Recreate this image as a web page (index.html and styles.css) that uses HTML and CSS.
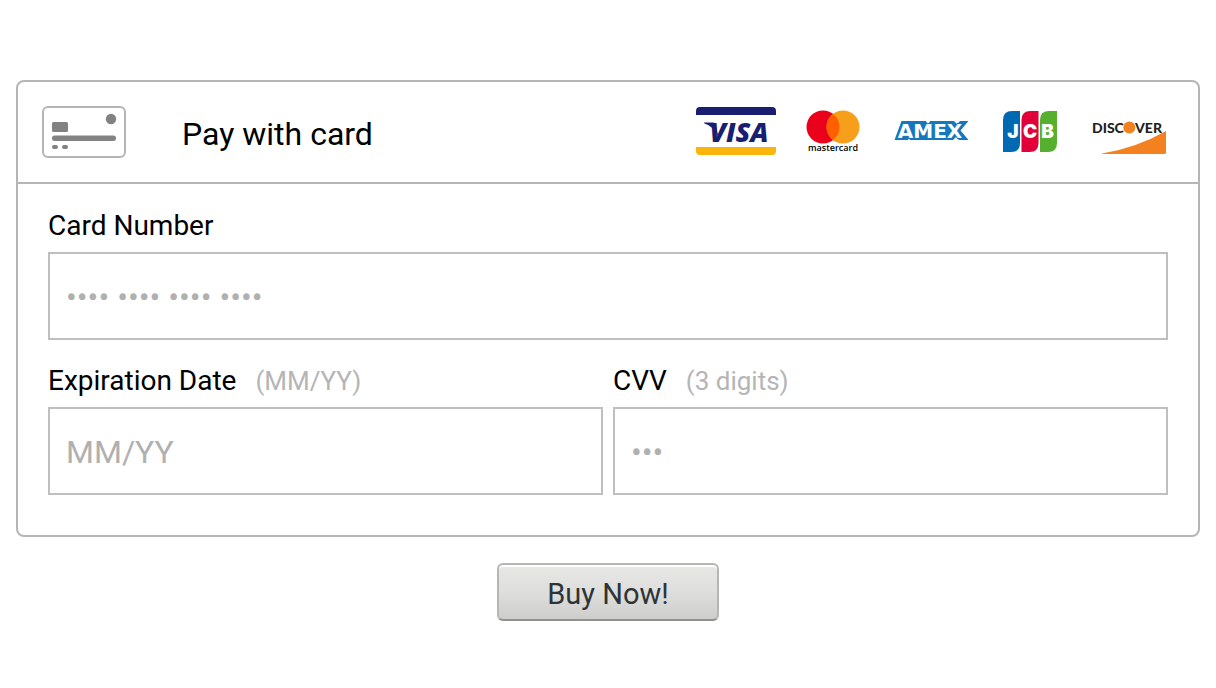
FILE: index.html
```html
<!DOCTYPE html>
<html lang="en">
<head>
<meta charset="utf-8">
<meta name="viewport" content="width=device-width, initial-scale=1">
<title>Pay with card</title>
<link rel="stylesheet" href="styles.css">
</head>
<body>
<form class="checkout">
  <section class="sheet">
    <header class="sheet-header">
      <svg class="card-icon" viewBox="0 0 84 52" aria-hidden="true">
        <rect x="1" y="1" width="82" height="50" rx="5" fill="#fff" stroke="#b5b5b5" stroke-width="2"/>
        <g fill="#828282">
          <circle cx="69" cy="13" r="5.2"/>
          <rect x="10" y="16" width="16" height="10" rx="1.500"/>
          <rect x="10" y="29.500" width="64" height="5.500" rx="2.700"/>
          <rect x="10" y="39" width="6" height="4" rx="2"/>
          <rect x="20" y="39" width="6" height="4" rx="2"/>
        </g>
      </svg>
      <h1 class="sheet-title">Pay with card</h1>
      <div class="brands">
        <svg class="brand" viewBox="0 0 80 48" role="img" aria-label="Visa">
          <path d="M0 8V4q0-4 4-4h72q4 0 4 4v4z" fill="#191e70"/>
          <path d="M0 40v4q0 4 4 4h72q4 0 4-4v-4z" fill="#f9b50b"/>
          <path d="M8 15.500h9q2.500 0 3 3l2.500 12q-4-11-14.500-14.200z" fill="#191e70"/>
          <text class="visa-text" x="43" y="34.500">VISA</text>
        </svg>
        <svg class="brand" viewBox="0 0 80 48" role="img" aria-label="Mastercard">
          <circle cx="29" cy="20" r="16.500" fill="#eb001b"/>
          <circle cx="49" cy="20" r="16.500" fill="#f79e1b"/>
          <path d="M39 6.880a16.500 16.500 0 0 1 0 26.240a16.500 16.500 0 0 1 0-26.240z" fill="#ff5f00"/>
          <text class="mc-text" x="39" y="44">mastercard</text>
        </svg>
        <svg class="brand" viewBox="0 0 80 48" role="img" aria-label="American Express">
          <path d="M9.500 14H34l2 4 2-4h24l3 3 3-3h8.500l-8 9.500L76.500 33H67l-3-3-3 3H18l-1-2-1 2H2.500z" fill="#1478be"/>
          <text class="amex-text" x="38" y="31">AMEX</text>
        </svg>
        <svg class="brand" viewBox="0 0 80 48" role="img" aria-label="JCB">
          <path d="M13 45V13q0-9 9-9h8v32q0 9-9 9z" fill="#0069b4"/>
          <path d="M31.500 45V13q0-9 9-9h8v32q0 9-9 9z" fill="#e2003b"/>
          <path d="M50 45V13q0-9 9-9h8v32q0 9-9 9z" fill="#55b02f"/>
          <text class="jcb-text" x="23" y="31">J</text>
          <text class="jcb-text" x="40" y="31">C</text>
          <text class="jcb-text" x="57.500" y="31">B</text>
        </svg>
        <svg class="brand" viewBox="0 0 80 48" role="img" aria-label="Discover">
          <text class="disc-text" x="4" y="26">DISC</text>
          <circle cx="41.300" cy="20.500" r="6" fill="#f48120"/>
          <text class="disc-text disc-end" x="74" y="26">VER</text>
          <path d="M14 46.500Q48 41 78 24v21.500q0 1.500-1.500 1.500H14z" fill="#f48120"/>
        </svg>
      </div>
    </header>
    <div class="fields">
      <div class="field field-wide">
        <label class="label" for="number">Card Number</label>
        <input class="input" id="number" type="text" inputmode="numeric" placeholder="•••• •••• •••• ••••">
      </div>
      <div class="field">
        <label class="label" for="expiry">Expiration Date <span class="hint">(MM/YY)</span></label>
        <input class="input" id="expiry" type="text" inputmode="numeric" placeholder="MM/YY">
      </div>
      <div class="field">
        <label class="label" for="cvv">CVV <span class="hint">(3 digits)</span></label>
        <input class="input" id="cvv" type="text" inputmode="numeric" placeholder="•••">
      </div>
    </div>
  </section>
  <button class="buy" type="button">Buy Now!</button>
</form>
</body>
</html>
```
FILE: styles.css
```css
* {
  box-sizing: border-box;
}

body {
  margin: 0;
  background: #fff;
  color: #000;
  font-family: Roboto, "Liberation Sans", sans-serif;
}

.checkout {
  display: flex;
  flex-direction: column;
  align-items: center;
  gap: 26px;
  padding: 80px 16px 64px;
}

.sheet {
  width: 100%;
  border: 2px solid #b5b5b5;
  border-radius: 8px;
}

.sheet-header {
  display: flex;
  align-items: center;
  padding: 24px 30px 24px 24px;
  border-bottom: 2px solid #b5b5b5;
}

.card-icon {
  flex: none;
  width: 84px;
  height: 52px;
}

.sheet-title {
  flex: 1;
  margin: 0 0 0 56px;
  padding-top: 4px;
  font-size: 32px;
  line-height: 36px;
  font-weight: 400;
}

.brands {
  display: flex;
  gap: 18px;
  padding-bottom: 2px;
}

.brand {
  width: 80px;
  height: 48px;
}

.brand text {
  text-anchor: middle;
}

.visa-text {
  font: italic 800 27px "Open Sans", sans-serif;
  fill: #191e70;
}

.mc-text {
  font: 600 9px "Open Sans", sans-serif;
}

.amex-text {
  font: 700 20px "DejaVu Sans", sans-serif;
  fill: #fff;
  stroke: #1478be;
  stroke-width: 2px;
  paint-order: stroke;
}

.jcb-text {
  font: 900 19px Inter, "DejaVu Sans", sans-serif;
  fill: #fff;
}

.brand .disc-text {
  font: 900 14px Lato, sans-serif;
  fill: #231f20;
  text-anchor: start;
}

.brand .disc-end {
  text-anchor: end;
}

.fields {
  display: grid;
  grid-template-columns: 1fr 1fr;
  gap: 24px 10px;
  padding: 25px 30px 40px;
}

.field {
  display: flex;
  flex-direction: column;
  gap: 10px;
  min-width: 0;
}

.field-wide {
  grid-column: 1 / -1;
}

.label {
  font-size: 28px;
  line-height: 33px;
}

.hint {
  margin-left: 12px;
  color: #b5b5b5;
  font-size: 26px;
  line-height: 1;
}

.input {
  width: 100%;
  height: 88px;
  padding: 2px 16px 0;
  border: 2px solid #bfbfbf;
  border-radius: 0;
  background: #fff;
  color: #000;
  font: 32px Roboto, "Liberation Sans", sans-serif;
}

.input::placeholder {
  color: #b0b0b0;
  opacity: 1;
}

.buy {
  padding: 12px 48px 8px;
  border: 2px solid #b6b6b3;
  border-bottom-color: #91918d;
  border-radius: 6px;
  background: linear-gradient(#e8e8e7, #dededd 50%, #cececd);
  box-shadow: inset 0 2px #fff;
  color: #2e3436;
  font: 29px/34px Roboto, "Liberation Sans", sans-serif;
}
```
